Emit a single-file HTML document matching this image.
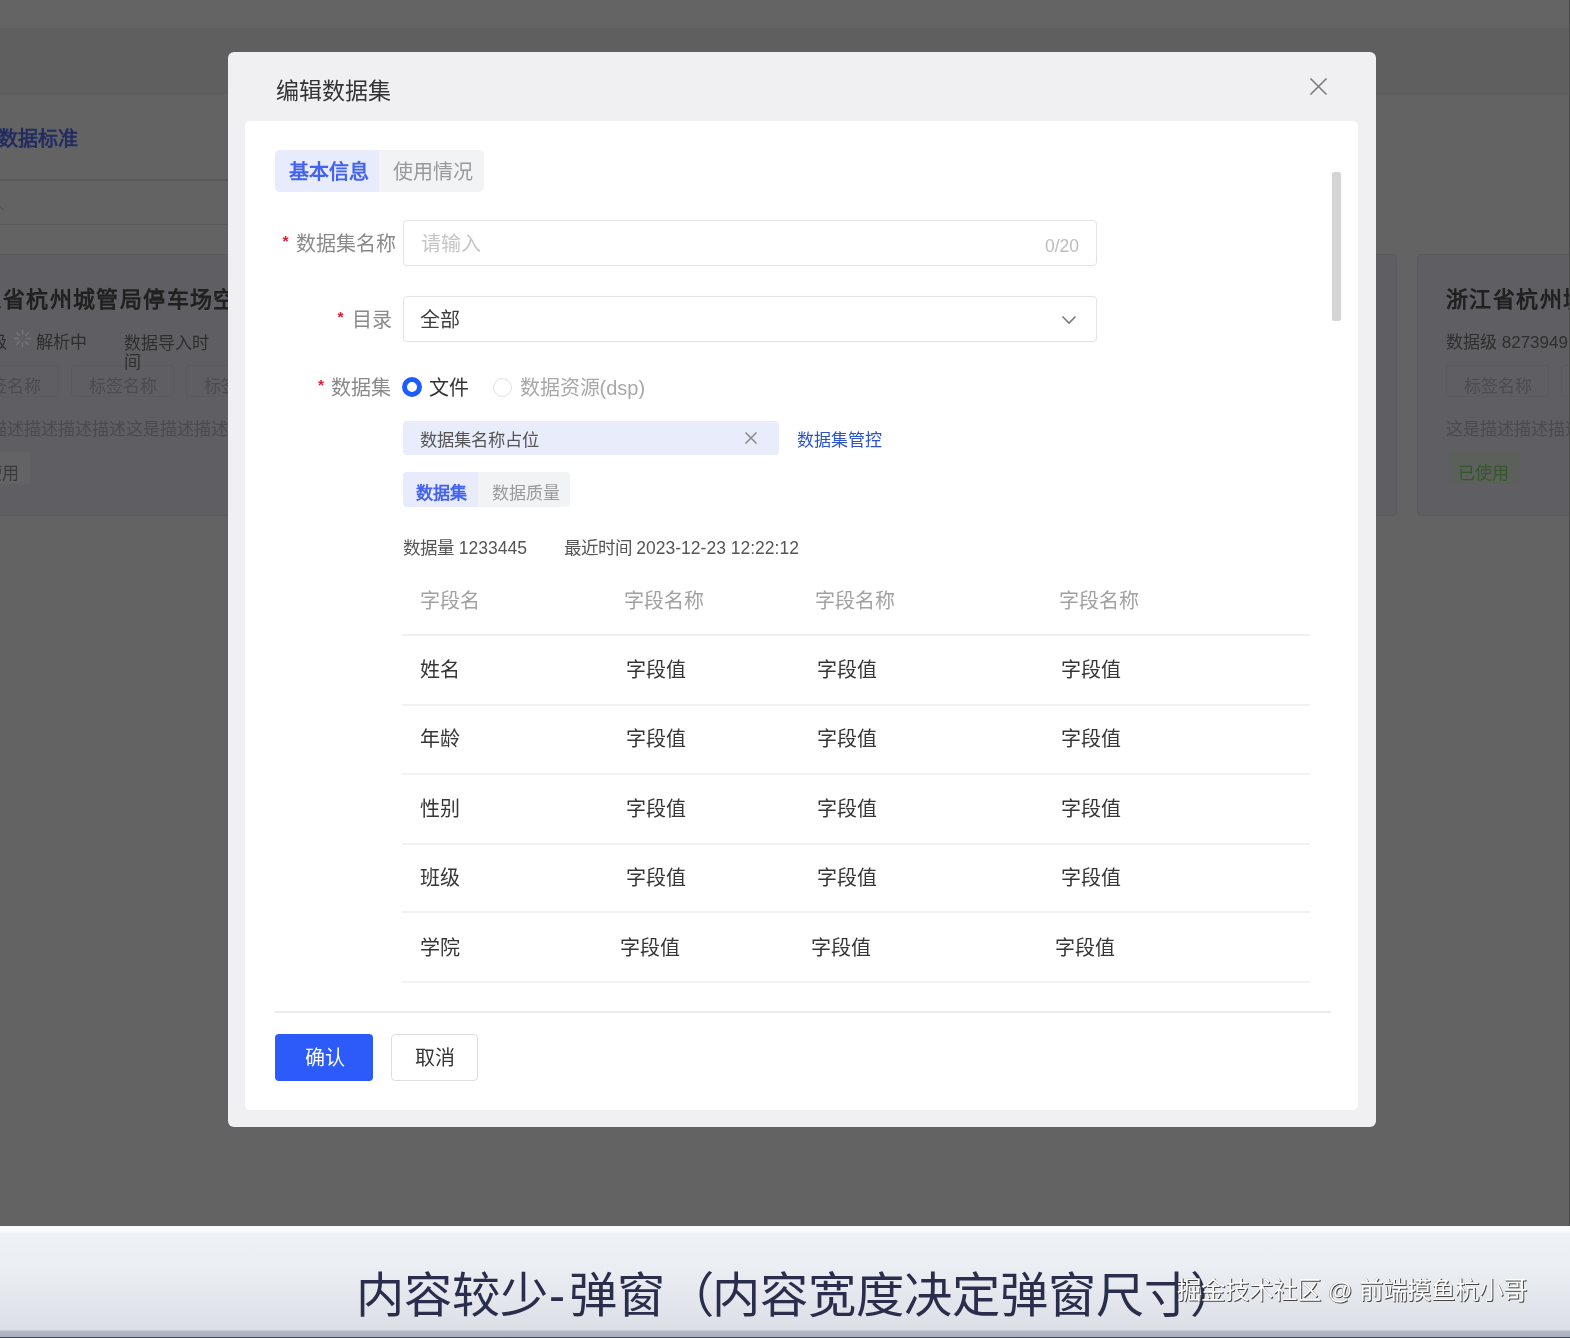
<!DOCTYPE html>
<html lang="zh-CN">
<head>
<meta charset="utf-8">
<style>
html,body{margin:0;padding:0;overflow:hidden}
body{width:1570px;height:1338px;overflow:hidden;position:relative;background:#636363;font-family:"Liberation Sans",sans-serif}
.a{position:absolute;white-space:nowrap}
.t{position:absolute;white-space:nowrap;line-height:1}
/* background page */
#bg1{left:0;top:0;width:1570px;height:28px;background:#646464}
#bg2{left:0;top:28px;width:1570px;height:67px;background:#5f5f5f}
.card{position:absolute;top:254px;height:262px;width:725px;background:#5f5f63;border:1px solid #5a5a5d;border-radius:4px;box-sizing:border-box}
/* modal */
#modal{left:228px;top:52px;width:1148px;height:1075px;background:#f0f0f3;border-radius:6px}
#panel{left:245px;top:121px;width:1113px;height:988.5px;background:#fff;border-radius:5px}
/* caption */
.cap{position:absolute;white-space:nowrap;line-height:1;top:1271px;font-size:48.3px;font-weight:300;color:#2a2d4c}
#cap{left:0;top:1226px;width:1570px;height:112px;background:linear-gradient(#fbfcfd 0px,#fafbfc 5px,#eef2f6 8px,#ebeff4 40px,#dcdfe5 104px,#b2b8c6 105px,#a9b0c0 111px,#3e4452 111px)}
.wrap{position:absolute;left:0;top:0;width:1570px;height:1338px;overflow:hidden;filter:blur(0.4px)}
</style>
</head>
<body><div class="wrap">
<!-- background page -->
<div class="a" id="bg1"></div>
<div class="a" id="bg2"></div>
<div class="t" style="left:-2px;top:129px;font-size:20px;font-weight:700;color:#232c60">数据标准</div>
<div class="a" style="left:0;top:178.5px;width:228px;height:2px;background:#595959"></div>
<svg class="a" style="left:-2px;top:204px" width="8" height="8" viewBox="0 0 8 8"><path d="M1 1.5L5.5 6" stroke="#555" stroke-width="1.6" fill="none"/></svg>
<div class="a" style="left:0;top:224px;width:228px;height:1px;background:#5b5b5b"></div>

<div class="card" style="left:-73px"></div>
<div class="card" style="left:672px"></div>
<div class="card" style="left:1417px"></div>
<!-- card A content -->
<div class="t" style="left:-44px;top:289px;font-size:22px;letter-spacing:1.4px;font-weight:700;color:#202020">浙江省杭州城管局停车场空间</div>
<div class="t" style="left:-44px;top:334px;font-size:17px;color:#2e2e2e">数据级</div>
<svg class="a" style="left:13px;top:329px" width="19" height="19" viewBox="0 0 19 19"><g stroke="#747474" stroke-width="1.5" stroke-linecap="round"><path d="M9.5 1.5V5"/><path d="M9.5 14V17.5"/><path d="M1.5 9.5H5"/><path d="M14 9.5H17.5"/><path d="M3.8 3.8L6.3 6.3"/><path d="M12.7 12.7L15.2 15.2"/><path d="M15.2 3.8L12.7 6.3"/><path d="M6.3 12.7L3.8 15.2"/></g></svg>
<div class="t" style="left:36px;top:334px;font-size:17px;color:#2e2e2e">解析中</div>
<div class="t" style="z-index:2;left:124px;top:334px;font-size:17px;line-height:19px;color:#2e2e2e;white-space:normal;width:90px">数据导入时间</div>
<div class="a" style="left:-44.5px;top:365px;width:103px;height:32px;border:1px solid #5b5b5e;background:#5f5f63;box-sizing:border-box;border-radius:3px"></div>
<div class="t" style="left:-27px;top:378px;font-size:17px;color:#4c4c4f">标签名称</div>
<div class="a" style="left:70.5px;top:365px;width:103px;height:32px;border:1px solid #5b5b5e;background:#5f5f63;box-sizing:border-box;border-radius:3px"></div>
<div class="t" style="left:89px;top:378px;font-size:17px;color:#4c4c4f">标签名称</div>
<div class="a" style="left:185.5px;top:365px;width:103px;height:32px;border:1px solid #5b5b5e;background:#5f5f63;box-sizing:border-box;border-radius:3px"></div>
<div class="t" style="left:204px;top:378px;font-size:17px;color:#4c4c4f">标签名称</div>
<div class="t" style="left:-44px;top:421px;font-size:17px;color:#4b4b4d">这是描述描述描述描述这是描述描述描述描述</div>
<div class="a" style="left:-41px;top:452px;width:71px;height:32px;background:#636366;border-radius:3px"></div>
<div class="t" style="left:-32px;top:465px;font-size:17px;color:#3a3a3a">已使用</div>
<!-- card C content -->
<div class="t" style="left:1446px;top:289px;font-size:22px;letter-spacing:1.4px;font-weight:700;color:#202020">浙江省杭州城管局</div>
<div class="t" style="left:1446px;top:334px;font-size:17px;color:#2e2e2e">数据级 8273949</div>
<div class="a" style="left:1445.5px;top:365px;width:103px;height:32px;border:1px solid #5b5b5e;background:#5f5f63;box-sizing:border-box;border-radius:3px"></div>
<div class="t" style="left:1464px;top:378px;font-size:17px;color:#4c4c4f">标签名称</div>
<div class="a" style="left:1560.5px;top:365px;width:103px;height:32px;border:1px solid #5b5b5e;background:#5f5f63;box-sizing:border-box;border-radius:3px"></div>
<div class="t" style="left:1446px;top:421px;font-size:17px;color:#4b4b4d">这是描述描述描述描述</div>
<div class="a" style="left:1449px;top:452px;width:71px;height:32px;background:#5b605b;border-radius:3px"></div>
<div class="t" style="left:1458px;top:465px;font-size:17px;color:#34572c">已使用</div>

<!-- modal -->
<div class="a" id="modal"></div>
<div class="a" id="panel"></div>
<div class="t" style="left:275.5px;top:80px;font-size:23px;font-weight:500;color:#333">编辑数据集</div>
<svg class="a" style="left:1309px;top:77px" width="19" height="19" viewBox="0 0 19 19"><path d="M1.5 1.5L17.5 17.5M17.5 1.5L1.5 17.5" stroke="#7b7b7b" stroke-width="1.6" fill="none"/></svg>

<!-- tabs -->
<div class="a" style="left:275px;top:150px;width:209px;height:42px;background:#f2f3f5;border-radius:5px"></div>
<div class="a" style="left:275px;top:150px;width:104px;height:42px;background:#e7ebfb;border-radius:5px 0 0 5px"></div>
<div class="t" style="left:288.5px;top:162px;font-size:20px;font-weight:700;color:#4262f2">基本信息</div>
<div class="t" style="left:393px;top:162px;font-size:20px;color:#9a9a9a">使用情况</div>

<!-- row 1 -->
<div class="t" style="left:282.5px;top:233px;font-size:15.5px;font-weight:700;color:#e01a2c">*</div>
<div class="t" style="left:295.5px;top:234px;font-size:20px;color:#8a8a8a">数据集名称</div>
<div class="a" style="left:403px;top:220px;width:694px;height:46px;border:1.5px solid #e4e4e4;border-radius:4px;box-sizing:border-box;box-shadow:0 0 1.5px rgba(0,0,0,.06)"></div>
<div class="t" style="left:421px;top:234px;font-size:20px;color:#c6c6c6">请输入</div>
<div class="t" style="left:1045px;top:238px;font-size:17.5px;color:#bcbcbc">0/20</div>

<!-- row 2 -->
<div class="t" style="left:337.5px;top:309px;font-size:15.5px;font-weight:700;color:#e01a2c">*</div>
<div class="t" style="left:351.5px;top:310px;font-size:20px;color:#8a8a8a">目录</div>
<div class="a" style="left:403px;top:296px;width:694px;height:46px;border:1.5px solid #e4e4e4;border-radius:4px;box-sizing:border-box;box-shadow:0 0 1.5px rgba(0,0,0,.06)"></div>
<div class="t" style="left:420px;top:310px;font-size:20px;color:#404040">全部</div>
<svg class="a" style="left:1061px;top:314px" width="16" height="12" viewBox="0 0 16 12"><path d="M1.5 2.5L8 9L14.5 2.5" stroke="#7a7a7a" stroke-width="1.6" fill="none"/></svg>

<!-- row 3 -->
<div class="t" style="left:318px;top:377px;font-size:15.5px;font-weight:700;color:#e01a2c">*</div>
<div class="t" style="left:330.5px;top:378px;font-size:20px;color:#8a8a8a">数据集</div>
<div class="a" style="left:402px;top:377px;width:20px;height:20px;border:5.5px solid #1d5cff;border-radius:50%;box-sizing:border-box;background:#fff"></div>
<div class="t" style="left:429px;top:378px;font-size:20px;color:#333">文件</div>
<div class="a" style="left:492.5px;top:377.5px;width:19.5px;height:19.5px;border:1.5px solid #e2e2e2;border-radius:50%;box-sizing:border-box;background:#fff"></div>
<div class="t" style="left:519.5px;top:378px;font-size:20px;color:#a8a8a8">数据资源(dsp)</div>

<!-- row 4 -->
<div class="a" style="left:403px;top:421px;width:376px;height:34px;background:#e8ecfb;border-radius:4px"></div>
<div class="t" style="left:420px;top:432px;font-size:17.3px;color:#555">数据集名称占位</div>
<svg class="a" style="left:744px;top:431px" width="14" height="14" viewBox="0 0 14 14"><path d="M1.5 1.5L12.5 12.5M12.5 1.5L1.5 12.5" stroke="#8a8a8a" stroke-width="1.5" fill="none"/></svg>
<div class="t" style="left:797px;top:432px;font-size:17px;color:#2a52cc">数据集管控</div>

<!-- sub tabs -->
<div class="a" style="left:403px;top:472px;width:167px;height:35px;background:#f2f3f5;border-radius:4px"></div>
<div class="a" style="left:403px;top:472px;width:75px;height:35px;background:#e7ebfb;border-radius:4px 0 0 4px"></div>
<div class="t" style="left:415.5px;top:485px;font-size:17px;font-weight:700;color:#4262f2">数据集</div>
<div class="t" style="left:491.5px;top:485px;font-size:17px;color:#9a9a9a">数据质量</div>

<!-- info -->
<div class="t" style="left:403px;top:540px;font-size:17.5px;color:#555">数据量 1233445</div>
<div class="t" style="left:563.5px;top:540px;font-size:17.5px;color:#555">最近时间 2023-12-23 12:22:12</div>

<!-- table -->
<div class="t" style="left:420px;top:591px;font-size:20px;color:#a2a2a2">字段名</div>
<div class="t" style="left:624px;top:591px;font-size:20px;color:#a2a2a2">字段名称</div>
<div class="t" style="left:815px;top:591px;font-size:20px;color:#a2a2a2">字段名称</div>
<div class="t" style="left:1059px;top:591px;font-size:20px;color:#a2a2a2">字段名称</div>
<div class="a" style="left:402px;top:634px;width:908px;height:2px;background:#f0f0f0"></div>

<div class="t" style="left:420px;top:660px;font-size:20px;color:#363636">姓名</div>
<div class="t" style="left:626px;top:660px;font-size:20px;color:#363636">字段值</div>
<div class="t" style="left:817px;top:660px;font-size:20px;color:#363636">字段值</div>
<div class="t" style="left:1061px;top:660px;font-size:20px;color:#363636">字段值</div>
<div class="a" style="left:402px;top:704px;width:908px;height:2px;background:#f2f2f2"></div>

<div class="t" style="left:420px;top:729px;font-size:20px;color:#363636">年龄</div>
<div class="t" style="left:626px;top:729px;font-size:20px;color:#363636">字段值</div>
<div class="t" style="left:817px;top:729px;font-size:20px;color:#363636">字段值</div>
<div class="t" style="left:1061px;top:729px;font-size:20px;color:#363636">字段值</div>
<div class="a" style="left:402px;top:773px;width:908px;height:2px;background:#f2f2f2"></div>

<div class="t" style="left:420px;top:799px;font-size:20px;color:#363636">性别</div>
<div class="t" style="left:626px;top:799px;font-size:20px;color:#363636">字段值</div>
<div class="t" style="left:817px;top:799px;font-size:20px;color:#363636">字段值</div>
<div class="t" style="left:1061px;top:799px;font-size:20px;color:#363636">字段值</div>
<div class="a" style="left:402px;top:843px;width:908px;height:2px;background:#f2f2f2"></div>

<div class="t" style="left:420px;top:868px;font-size:20px;color:#363636">班级</div>
<div class="t" style="left:626px;top:868px;font-size:20px;color:#363636">字段值</div>
<div class="t" style="left:817px;top:868px;font-size:20px;color:#363636">字段值</div>
<div class="t" style="left:1061px;top:868px;font-size:20px;color:#363636">字段值</div>
<div class="a" style="left:402px;top:911px;width:908px;height:2px;background:#f2f2f2"></div>

<div class="t" style="left:420px;top:938px;font-size:20px;color:#363636">学院</div>
<div class="t" style="left:620px;top:938px;font-size:20px;color:#363636">字段值</div>
<div class="t" style="left:811px;top:938px;font-size:20px;color:#363636">字段值</div>
<div class="t" style="left:1055px;top:938px;font-size:20px;color:#363636">字段值</div>
<div class="a" style="left:402px;top:981px;width:908px;height:2px;background:#f2f2f2"></div>

<!-- scrollbar -->
<div class="a" style="left:1332px;top:172px;width:9px;height:149px;background:#d5d5d5;border-radius:2px"></div>

<!-- footer -->
<div class="a" style="left:275px;top:1011px;width:1056px;height:2px;background:#ececec"></div>
<div class="a" style="left:275px;top:1034px;width:98px;height:47px;background:#2d5bfa;border-radius:4px"></div>
<div class="t" style="left:305px;top:1048px;font-size:20px;color:#fff">确认</div>
<div class="a" style="left:391px;top:1034px;width:87px;height:47px;border:1.5px solid #dedede;border-radius:4px;box-sizing:border-box;background:#fff"></div>
<div class="t" style="left:414.5px;top:1048px;font-size:20px;color:#363636">取消</div>

<div class="a" style="left:1568.5px;top:0;width:1.5px;height:1338px;background:#4a4a4a"></div>
<!-- caption -->
<div class="a" id="cap"></div>
<div class="cap" style="left:356px">内容较少</div>
<div class="cap" style="left:549px">-</div>
<div class="cap" style="left:569px">弹窗</div>
<div class="cap" style="left:665.6px">（</div>
<div class="cap" style="left:711.7px">内容宽度决定弹窗尺寸</div>
<div class="cap" style="left:1190px">）</div>
<div class="t" style="left:1177px;top:1278.5px;font-size:24.45px;color:#fff;text-shadow:1px 1px 0.5px #444,-0.5px 0 0 #888">掘金技术社区 @ 前端摸鱼杭小哥</div>
</div></body>
</html>
